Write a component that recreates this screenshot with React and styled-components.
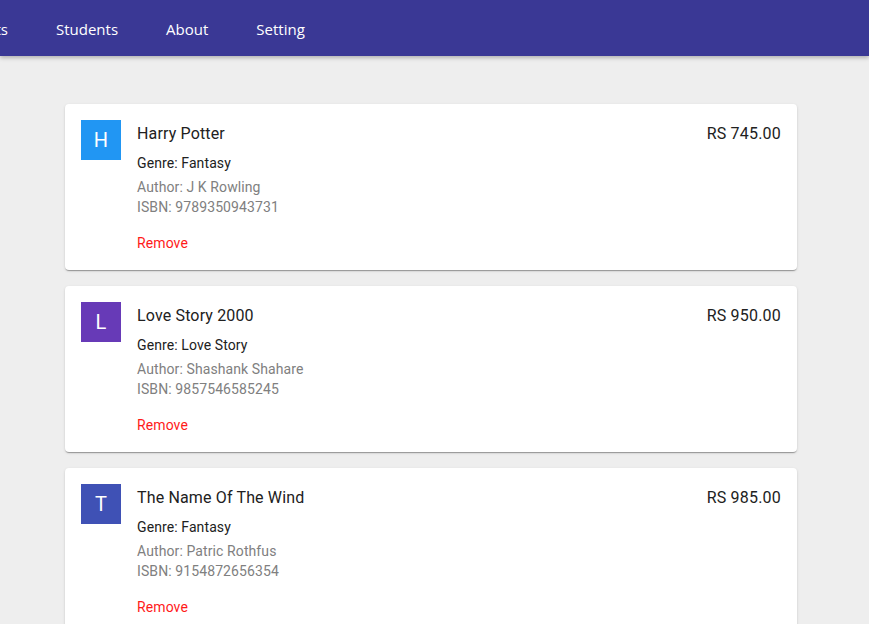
import React from "react";
import styled, { createGlobalStyle } from "styled-components";

const Global = createGlobalStyle`
  html, body { margin: 0; padding: 0; background: #eeeeee; overflow: hidden; }
  body { font-family: Roboto, "Liberation Sans", sans-serif; }
`;

const Header = styled.header`
  height: 56px;
  background: #3a3895;
  box-shadow: 0 2px 4px rgba(0,0,0,0.25);
  display: flex;
  align-items: center;
  overflow: hidden;
  position: relative;
  z-index: 1;
`;

const Nav = styled.nav`
  display: flex;
  align-items: center;
  height: 100%;
`;

const NavItem = styled.a`
  font-family: "Open Sans", "Noto Sans", sans-serif;
  font-size: 15px;
  color: #ffffff;
  padding: 2px 24px 0;
  white-space: nowrap;
  text-decoration: none;
  display: flex;
  align-items: center;
  height: 100%;
  box-sizing: border-box;
`;

const ClippedSlot = styled.div`
  width: 32px;
  overflow: hidden;
  display: flex;
  justify-content: flex-end;
  height: 100%;
`;

const Main = styled.main`
  padding: 48px 72px 24px 65px;
  display: flex;
  flex-direction: column;
  gap: 16px;
`;

const Card = styled.div`
  background: #fff;
  border-radius: 4px;
  box-shadow: 0 2px 1px -1px rgba(0,0,0,0.2), 0 1px 1px 0 rgba(0,0,0,0.14), 0 1px 3px 0 rgba(0,0,0,0.12);
  padding: 16px;
  display: flex;
  gap: 16px;
  align-items: flex-start;
`;

const Avatar = styled.div`
  width: 40px;
  height: 40px;
  background: ${p => p.$color};
  color: #fff;
  font-size: 20px;
  display: flex;
  align-items: center;
  justify-content: center;
  flex-shrink: 0;
`;

const Body = styled.div`
  flex: 1;
  display: flex;
  flex-direction: column;
  padding-top: 1px;
`;

const Title = styled.div`
  font-size: 16px;
  line-height: 26px;
  letter-spacing: 0.15px;
  color: #212121;
`;

const Genre = styled.div`
  font-size: 14px;
  line-height: 20px;
  letter-spacing: 0.1px;
  color: #212121;
  margin-top: 6px;
  margin-bottom: 4px;
`;

const Meta = styled.div`
  font-size: 14px;
  line-height: 20px;
  letter-spacing: 0.1px;
  color: #808080;
`;

const Remove = styled.a`
  font-size: 14px;
  line-height: 20px;
  letter-spacing: 0.1px;
  color: #ff1a1a;
  margin-top: 16px;
  margin-bottom: 1px;
  cursor: pointer;
`;

const Price = styled.div`
  font-size: 16px;
  line-height: 26px;
  letter-spacing: 0.2px;
  padding-top: 1px;
  color: #212121;
  white-space: nowrap;
`;

const books = [
  { title: "Harry Potter", genre: "Fantasy", author: "J K Rowling", isbn: "9789350943731", price: "RS 745.00", color: "#2196f3" },
  { title: "Love Story 2000", genre: "Love Story", author: "Shashank Shahare", isbn: "9857546585245", price: "RS 950.00", color: "#673ab7" },
  { title: "The Name Of The Wind", genre: "Fantasy", author: "Patric Rothfus", isbn: "9154872656354", price: "RS 985.00", color: "#3f51b5" },
];

export default function App() {
  return (
    <>
      <Global />
      <Header>
        <Nav>
          <ClippedSlot><NavItem>Products</NavItem></ClippedSlot>
          <NavItem>Students</NavItem>
          <NavItem>About</NavItem>
          <NavItem>Setting</NavItem>
        </Nav>
      </Header>
      <Main>
        {books.map(b => (
          <Card key={b.title}>
            <Avatar $color={b.color}>{b.title[0]}</Avatar>
            <Body>
              <Title>{b.title}</Title>
              <Genre>Genre: {b.genre}</Genre>
              <Meta>Author: {b.author}</Meta>
              <Meta>ISBN: {b.isbn}</Meta>
              <Remove>Remove</Remove>
            </Body>
            <Price>{b.price}</Price>
          </Card>
        ))}
      </Main>
    </>
  );
}
